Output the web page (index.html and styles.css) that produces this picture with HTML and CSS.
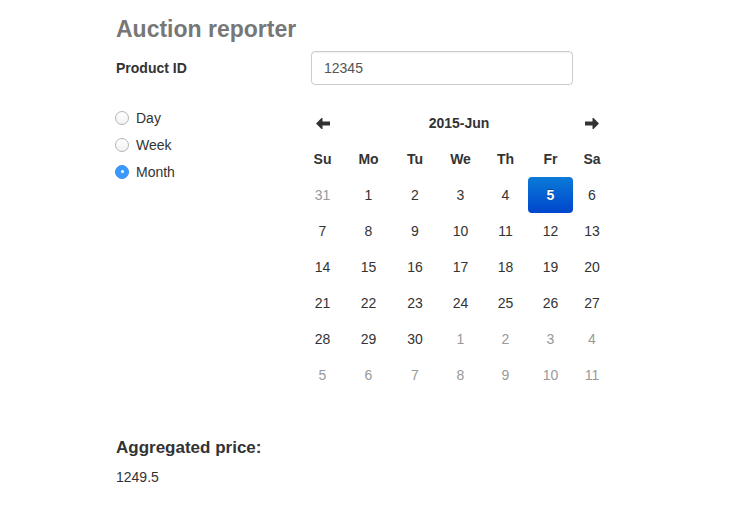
FILE: index.html
```html
<!DOCTYPE html>
<html>
<head>
<meta charset="utf-8">
<link rel="stylesheet" href="styles.css">
</head>
<body>
<div class="page">
  <h2 class="title">Auction reporter</h2>
  <div class="field-row">
    <label class="field-label">Product ID</label>
    <input class="field-input" type="text" value="12345">
  </div>
  <div class="main-row">
    <div class="radios">
      <div class="radio"><span class="dot"></span><span>Day</span></div>
      <div class="radio"><span class="dot"></span><span>Week</span></div>
      <div class="radio"><span class="dot checked"></span><span>Month</span></div>
    </div>
    <div class="calendar">
      <div class="cell nav"><svg width="14" height="11" viewBox="0 0 14 11"><path d="M0 5.5 L5.5 0 L6.5 0 L6.5 3.5 L14 3.5 L14 7.5 L6.5 7.5 L6.5 11 L5.5 11 Z" fill="#333"/></svg></div>
      <div class="cell month">2015-Jun</div>
      <div class="cell nav"><svg width="14" height="11" viewBox="0 0 14 11"><path d="M14 5.5 L8.5 0 L7.5 0 L7.5 3.5 L0 3.5 L0 7.5 L7.5 7.5 L7.5 11 L8.5 11 Z" fill="#333"/></svg></div>

      <div class="cell dow">Su</div><div class="cell dow">Mo</div><div class="cell dow">Tu</div><div class="cell dow">We</div><div class="cell dow">Th</div><div class="cell dow">Fr</div><div class="cell dow">Sa</div>

      <div class="cell day old">31</div><div class="cell day">1</div><div class="cell day">2</div><div class="cell day">3</div><div class="cell day">4</div><div class="cell day active">5</div><div class="cell day">6</div>
      <div class="cell day">7</div><div class="cell day">8</div><div class="cell day">9</div><div class="cell day">10</div><div class="cell day">11</div><div class="cell day">12</div><div class="cell day">13</div>
      <div class="cell day">14</div><div class="cell day">15</div><div class="cell day">16</div><div class="cell day">17</div><div class="cell day">18</div><div class="cell day">19</div><div class="cell day">20</div>
      <div class="cell day">21</div><div class="cell day">22</div><div class="cell day">23</div><div class="cell day">24</div><div class="cell day">25</div><div class="cell day">26</div><div class="cell day">27</div>
      <div class="cell day">28</div><div class="cell day">29</div><div class="cell day">30</div><div class="cell day old">1</div><div class="cell day old">2</div><div class="cell day old">3</div><div class="cell day old">4</div>
      <div class="cell day old">5</div><div class="cell day old">6</div><div class="cell day old">7</div><div class="cell day old">8</div><div class="cell day old">9</div><div class="cell day old">10</div><div class="cell day old">11</div>
    </div>
  </div>
  <h4 class="agg-title">Aggregated price:</h4>
  <div class="agg-value">1249.5</div>
</div>
</body>
</html>
```

FILE: styles.css
```css
html, body {
  margin: 0;
  padding: 0;
  background: #fff;
}
body {
  font-family: "Liberation Sans", Arial, Helvetica, sans-serif;
  font-size: 14px;
  color: #333;
}
.page {
  padding: 14px 0 0 116px;
}
.title {
  margin: 0;
  font-size: 23px;
  line-height: 30px;
  font-weight: bold;
  color: #777;
}
.field-row {
  display: flex;
  align-items: center;
  margin-top: 7px;
}
.field-label {
  width: 195px;
  font-weight: bold;
  font-size: 14px;
}
.field-input {
  box-sizing: border-box;
  width: 262px;
  height: 34px;
  padding: 6px 12px;
  border: 1px solid #ccc;
  border-radius: 4px;
  font-family: inherit;
  font-size: 14px;
  color: #555;
  outline: none;
  box-shadow: inset 0 1px 1px rgba(0,0,0,0.06);
}
.main-row {
  display: flex;
  margin-top: 20px;
}
.radios {
  width: 184px;
  margin-top: -1px;
}
.radio {
  display: flex;
  align-items: center;
  height: 27px;
}
.dot {
  box-sizing: border-box;
  width: 14px;
  height: 14px;
  border-radius: 50%;
  border: 1px solid #b4b4b4;
  background: linear-gradient(#fff, #f2f2f2);
  margin: 0 7px 0 -1px;
  position: relative;
}
.dot.checked {
  border-color: #3a8ff2;
  background: #3b99fc;
}
.dot.checked::after {
  content: "";
  position: absolute;
  left: 4.5px;
  top: 4.5px;
  width: 3px;
  height: 3px;
  border-radius: 50%;
  background: #fff;
}
.calendar {
  display: grid;
  grid-template-columns: 45px 47px 46px 45px 45px 45px 38px;
  grid-auto-rows: 36px;
}
.cell {
  display: flex;
  align-items: center;
  justify-content: center;
}
.month {
  grid-column: span 5;
  font-weight: bold;
}
.nav svg {
  display: block;
}
.dow {
  font-weight: bold;
}
.day {
  color: #333;
}
.day.old {
  color: #999;
}
.day.active {
  background: linear-gradient(to bottom, #0a7ad8, #0046cc);
  color: #fff;
  font-weight: bold;
  border-radius: 4px;
  text-shadow: 0 -1px 0 rgba(0,0,0,0.25);
}
.agg-title {
  margin: 44px 0 0 0;
  font-size: 17px;
  line-height: 22px;
  font-weight: bold;
  color: #333;
}
.agg-value {
  margin-top: 8px;
  line-height: 20px;
  font-size: 14px;
}
```
